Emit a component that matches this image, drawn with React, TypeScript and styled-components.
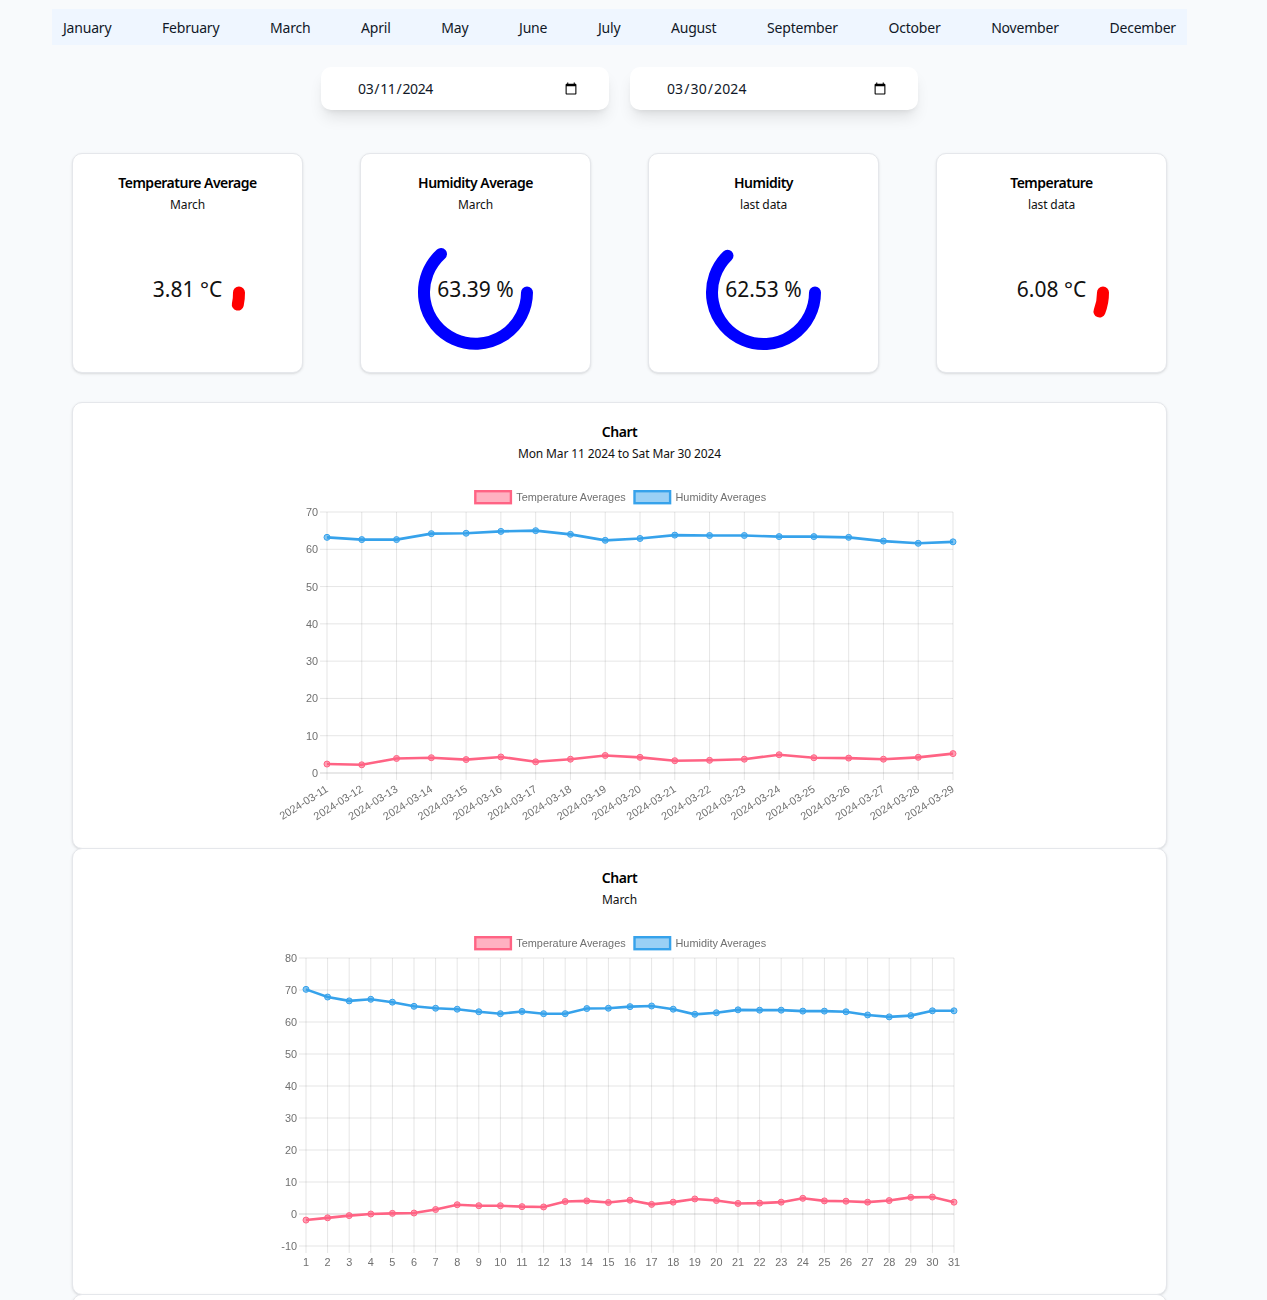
import React from "react";
import styled, { createGlobalStyle } from "styled-components";

const Global = createGlobalStyle`
  html, body { margin: 0; padding: 0; background: #f8fafc; }
  body { font-family: "Noto Sans", sans-serif; color: #000; height: 1300px; overflow: hidden; }
  * { box-sizing: border-box; }
`;
const Page = styled.div`
  width: 1267px;
  padding: 9px 80px 0 52px;
`;
const MonthBar = styled.nav`
  display: flex;
  justify-content: space-between;
  align-items: center;
  height: 36px;
  padding: 0 11px;
  background: #eff6ff;
  font-size: 14px;
  letter-spacing: -0.2px;
  color: #111827;
`;
const DateRow = styled.div`
  display: flex;
  justify-content: center;
  gap: 21px;
  margin-top: 22px;
  padding-right: 1px;
`;
const DateInput = styled.input<{ $tracking: number }>`
  width: 288px;
  height: 43px;
  border: 0;
  outline: 0;
  border-radius: 10px;
  background: #fff;
  padding: 0 29px 0 36.5px;
  font: 14px "Noto Sans", sans-serif;
  letter-spacing: ${(p) => p.$tracking}px;
  color: #111827;
  box-shadow: 0 10px 15px -3px rgba(0,0,0,.1), 0 4px 6px -4px rgba(0,0,0,.1);
`;
const Content = styled.div`
  margin: 43px 20px 0;
  width: 1095px;
`;
const StatGrid = styled.div`
  display: grid;
  grid-template-columns: repeat(4, 231px);
  justify-content: space-between;
  margin-bottom: 29px;
`;
const Card = styled.section`
  background: #fff;
  border: 1px solid #e5e7eb;
  border-radius: 10px;
  box-shadow: 0 1px 3px rgba(0,0,0,.1), 0 1px 2px -1px rgba(0,0,0,.1);
  padding-top: 19px;
  text-align: center;
`;
const StatCard = styled(Card)`
  height: 220px;
`;
const ChartCard = styled(Card)`
  height: 447px;
  margin-bottom: -1px;
`;
const Title = styled.h3`
  margin: 0;
  font-size: 14px;
  line-height: 20px;
  font-weight: 600;
  letter-spacing: -0.5px;
  color: #000;
`;
const Sub = styled.p`
  margin: 3px 0 0;
  font-size: 12px;
  line-height: 18px;
  letter-spacing: -0.12px;
  color: #111;
`;
const Gauge = styled.div`
  margin-top: 18px;
  height: 120px;
  position: relative;
`;
const GaugeSvg = styled.svg`
  display: block;
  width: 229px;
  height: 120px;
`;
const GaugeValue = styled.span`
  position: absolute;
  left: 0;
  right: 0;
  top: 43px;
  font-size: 21px;
  line-height: 28px;
  color: #111;
`;
const ChartSvg = styled.svg`
  display: block;
  width: 1093px;
  filter: blur(0.55px);
  font-family: "Liberation Sans", Arial, sans-serif;
`;

const months = ["January","February","March","April","May","June","July","August","September","October","November","December"];

type Stat = { title: string; sub: string; value: string; arc: string; stroke: string };
const stats: Stat[] = [
  { title: "Temperature Average", sub: "March", value: "3.81 °C", stroke: "#ff0000", arc: "M166 60.5 A51.5 51.5 0 0 1 164.8 72.6" },
  { title: "Humidity Average", sub: "March", value: "63.39 %", stroke: "#0000ff", arc: "M80 22 A51.5 51.5 0 1 0 166 60.5" },
  { title: "Humidity", sub: "last data", value: "62.53 %", stroke: "#0000ff", arc: "M78.5 23.7 A51.5 51.5 0 1 0 166 60.5" },
  { title: "Temperature", sub: "last data", value: "6.08 °C", stroke: "#ff0000", arc: "M166 60.5 A51.5 51.5 0 0 1 162.5 79.5" },
];

const RED = "rgb(255,99,132)";
const BLUE = "rgb(54,162,235)";
const GRID = "rgba(0,0,0,0.1)";
const TICK = "#707070";

type ChartProps = {
  height: number;
  x0: number; x1: number; yTop: number; yBottom: number;
  max: number; min: number;
  labels: string[]; rotate?: boolean;
  temp: number[]; hum: number[];
};

const Legend: React.FC = () => (
  <g fontSize={10.9} fill={TICK}>
    <rect x={402.3} y={28.2} width={35.6} height={12} fill="rgba(255,99,132,.5)" stroke={RED} strokeWidth={2.4} />
    <text x={443.3} y={38}>Temperature Averages</text>
    <rect x={561.5} y={28.2} width={35.6} height={12} fill="rgba(54,162,235,.5)" stroke={BLUE} strokeWidth={2.4} />
    <text x={602.5} y={38}>Humidity Averages</text>
  </g>
);

const LineChart: React.FC<ChartProps> = ({ height, x0, x1, yTop, yBottom, max, min, labels, rotate, temp, hum }) => {
  const n = labels.length;
  const sx = (i: number) => x0 + ((x1 - x0) * i) / (n - 1);
  const sy = (v: number) => yTop + ((max - v) * (yBottom - yTop)) / (max - min);
  const ticks: number[] = [];
  for (let v = max; v >= min; v -= 10) ticks.push(v);
  const series = (d: number[], color: string) => (
    <g>
      <polyline points={d.map((v, i) => `${sx(i)},${sy(v)}`).join(" ")} fill="none" stroke={color} strokeWidth={2.6} />
      {d.map((v, i) => (
        <circle key={i} cx={sx(i)} cy={sy(v)} r={3} fill={color} fillOpacity={0.6} stroke={color} strokeWidth={1} />
      ))}
    </g>
  );
  return (
    <ChartSvg viewBox={`0 0 1093 ${height}`} height={height}>
      <Legend />
      {ticks.map((v) => (
        <g key={v}>
          <line x1={x0 - 7} x2={x1} y1={sy(v)} y2={sy(v)} stroke={v === 0 ? "rgba(0,0,0,.18)" : GRID} strokeWidth={1} />
          <text x={x0 - 9} y={sy(v) + 4} textAnchor="end" fontSize={10.9} fill={TICK}>{v}</text>
        </g>
      ))}
      {labels.map((l, i) => (
        <g key={l}>
          <line x1={sx(i)} x2={sx(i)} y1={yTop} y2={yBottom + 7} stroke={GRID} strokeWidth={1} />
          {rotate ? (
            <text transform={`translate(${sx(i) + 2},${yBottom + 18}) rotate(-32)`} textAnchor="end" fontSize={10.9} fill={TICK}>{l}</text>
          ) : (
            <text x={sx(i)} y={yBottom + 20} textAnchor="middle" fontSize={10.9} fill={TICK}>{l}</text>
          )}
        </g>
      ))}
      {series(temp, RED)}
      {series(hum, BLUE)}
    </ChartSvg>
  );
};

const hum31 = [70.2,67.8,66.6,67.1,66.2,64.9,64.3,64,63.2,62.6,63.3,62.6,62.6,64.2,64.3,64.8,65,64,62.4,62.9,63.8,63.7,63.7,63.4,63.4,63.2,62.2,61.6,62,63.5,63.5];
const temp31 = [-1.9,-1.2,-0.5,0,0.2,0.3,1.4,2.9,2.6,2.6,2.3,2.2,3.9,4.1,3.6,4.3,3,3.7,4.7,4.2,3.3,3.4,3.7,4.9,4.1,4,3.7,4.2,5.2,5.3,3.7];
const hum19 = [63.2, ...hum31.slice(11, 29)];
const temp19 = [2.4, ...temp31.slice(11, 29)];
const dates = Array.from({ length: 19 }, (_, i) => `2024-03-${i + 11}`);
const days = Array.from({ length: 31 }, (_, i) => String(i + 1));

export default function App() {
  return (
    <Page>
      <Global />
      <MonthBar>{months.map((m) => <span key={m}>{m}</span>)}</MonthBar>
      <DateRow>
        <DateInput type="date" defaultValue="2024-03-11" $tracking={-0.35} />
        <DateInput type="date" defaultValue="2024-03-30" $tracking={0.1} />
      </DateRow>
      <Content>
        <StatGrid>
          {stats.map((s) => (
            <StatCard key={s.title}>
              <Title>{s.title}</Title>
              <Sub>{s.sub}</Sub>
              <Gauge>
                <GaugeSvg viewBox="0 0 229 120">
                  <path d={s.arc} fill="none" stroke={s.stroke} strokeWidth={12} strokeLinecap="round" />
                </GaugeSvg>
                <GaugeValue>{s.value}</GaugeValue>
              </Gauge>
            </StatCard>
          ))}
        </StatGrid>
        <ChartCard>
          <Title>Chart</Title>
          <Sub>Mon Mar 11 2024 to Sat Mar 30 2024</Sub>
          <LineChart height={386} x0={254} x1={880} yTop={49} yBottom={310} max={70} min={0} labels={dates} rotate temp={temp19} hum={hum19} />
        </ChartCard>
        <ChartCard>
          <Title>Chart</Title>
          <Sub>March</Sub>
          <LineChart height={386} x0={233} x1={881} yTop={49} yBottom={337} max={80} min={-10} labels={days} temp={temp31} hum={hum31} />
        </ChartCard>
        <Card />
      </Content>
    </Page>
  );
}
